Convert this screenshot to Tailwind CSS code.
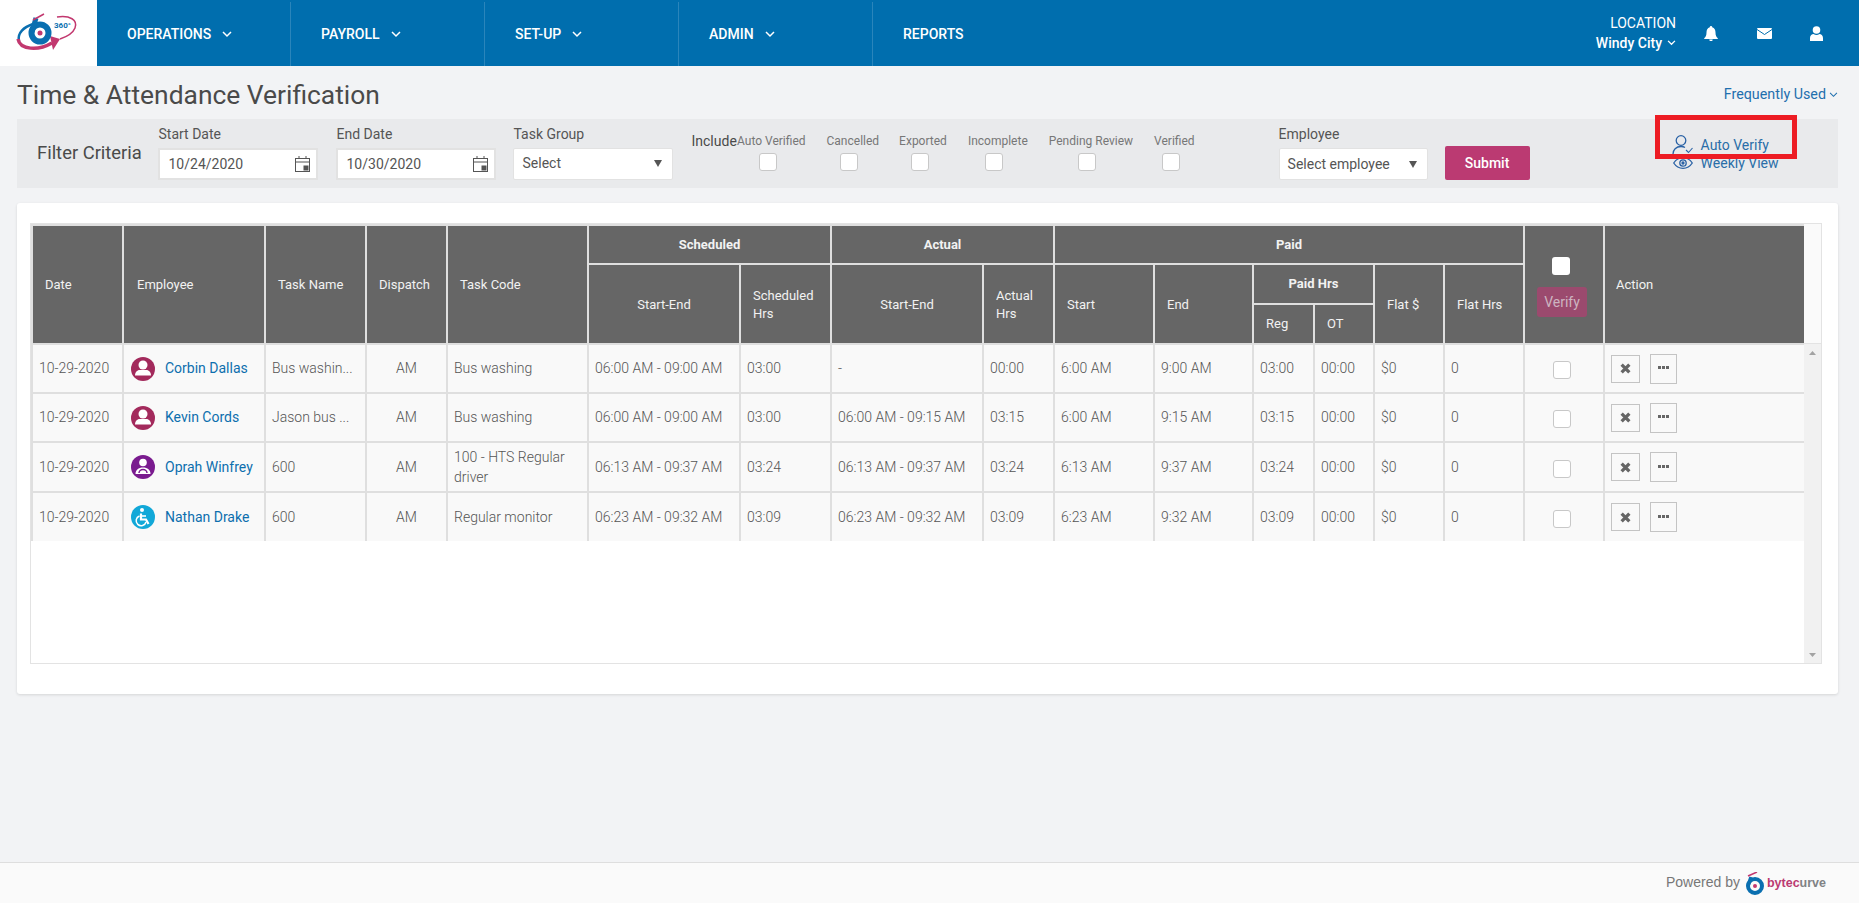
<!DOCTYPE html>
<html><head><meta charset="utf-8"><title>Time &amp; Attendance Verification</title>
<script src="https://cdn.jsdelivr.net/npm/@tailwindcss/browser@4"></script></head>
<body class="relative h-[903px] w-[1859px] overflow-hidden bg-[#f2f3f5] font-['Roboto',sans-serif] text-[14px] text-[#555]">

<header class="flex h-[66px] bg-[#006eae] text-white">
  <div class="h-[66px] w-[97px] bg-white">
    <svg width="97" height="66" viewBox="0 0 97 66" fill="none">
      <path d="M19 41C17 33 24 27 33 24" stroke="#0a6fb0" stroke-width="2.500"/>
      <path d="M18 39C20 50 38 51 52 43" stroke="#c2386f" stroke-width="3.500"/>
      <path d="M50 36L60 39L53 50Z" fill="#c2386f"/>
      <circle cx="40" cy="33" r="8.500" stroke="#0a6fb0" stroke-width="6"/>
      <path d="M32 32L36 18" stroke="#0a6fb0" stroke-width="5"/>
      <circle cx="40" cy="33" r="2.500" fill="#c2386f"/>
      <path d="M33 20L44 14" stroke="#c2386f" stroke-width="1.500"/>
      <path d="M57 17C70 15 78 20 75 28C73 33 66 37 60 39" stroke="#c2386f" stroke-width="1.500"/>
      <text x="54" y="28" font-size="8" font-weight="700" fill="#0a6fb0" font-family="Roboto">360°</text>
    </svg>
  </div>
  <nav class="flex pt-[2px] font-medium">
    <a class="flex w-[193px] items-center gap-[11px] pl-[30px]">OPERATIONS <svg width="10" height="7" viewBox="0 0 10 7" fill="none" stroke="white" stroke-width="1.500"><path d="M1 1l4 4 4-4"/></svg></a>
    <a class="flex w-[194px] items-center gap-[11px] border-l border-[#2a85bb] pl-[30px]">PAYROLL <svg width="10" height="7" viewBox="0 0 10 7" fill="none" stroke="white" stroke-width="1.500"><path d="M1 1l4 4 4-4"/></svg></a>
    <a class="flex w-[194px] items-center gap-[11px] border-l border-[#2a85bb] pl-[30px]">SET-UP <svg width="10" height="7" viewBox="0 0 10 7" fill="none" stroke="white" stroke-width="1.500"><path d="M1 1l4 4 4-4"/></svg></a>
    <a class="flex w-[194px] items-center gap-[11px] border-l border-[#2a85bb] pl-[30px]">ADMIN <svg width="10" height="7" viewBox="0 0 10 7" fill="none" stroke="white" stroke-width="1.500"><path d="M1 1l4 4 4-4"/></svg></a>
    <a class="flex w-[194px] items-center border-l border-[#2a85bb] pl-[30px]">REPORTS</a>
  </nav>
  <div class="ml-auto flex items-center">
    <div class="mr-[28px] text-right leading-[20px]">
      <div class="font-normal">LOCATION</div>
      <div class="flex items-center gap-[5px] font-medium">Windy City <svg width="9" height="6" viewBox="0 0 10 7" fill="none" stroke="white" stroke-width="1.500"><path d="M1 1l4 4 4-4"/></svg></div>
    </div>
    <svg class="mr-[39px]" width="14" height="15" viewBox="0 0 14 15" fill="white"><path d="M7 0a1.200 1.200 0 0 1 1.200 1.300C10.600 1.900 11.500 4 11.500 6.500c0 3 .8 4.500 2.300 5.700v.8H.2v-.8C1.700 11 2.500 9.500 2.500 6.500 2.500 4 3.400 1.900 5.800 1.300A1.200 1.200 0 0 1 7 0zM5.300 13.500h3.400a1.700 1.700 0 0 1-3.400 0z"/></svg>
    <svg class="mr-[38px]" width="15" height="11" viewBox="0 0 15 11"><rect width="15" height="11" rx="1" fill="white"/><path d="M0 1.500l7.500 5 7.500-5" fill="none" stroke="#006eae" stroke-width="1"/></svg>
    <svg class="mr-[36px]" width="13" height="15" viewBox="0 0 13 15" fill="white"><circle cx="6.500" cy="4" r="3.800"/><path d="M0 15v-3c0-2.800 2-4 3.500-4 1 .7 2 1 3 1s2-.3 3-1c1.500 0 3.500 1.200 3.500 4v3z"/></svg>
  </div>
</header>

<main class="pr-[21px] pl-[17px]">
  <div class="flex h-[53px] items-center justify-between pt-[4px]">
    <h1 class="text-[26.4px] leading-[30px] font-normal text-[#4a4a4a]">Time &amp; Attendance Verification</h1>
    <div class="flex items-center gap-[3px] pt-[1px] text-[14.3px] text-[#1f6fae]">Frequently Used <svg width="9" height="6" viewBox="0 0 10 7" fill="none" stroke="#1f6fae" stroke-width="1.200"><path d="M1 1l4 4 4-4"/></svg></div>
  </div>

  <section class="flex h-[69px] items-start bg-[#e9eaec]">
    <div class="ml-[20px] w-[121.5px] pt-[23px] text-[18.4px] leading-[22px] text-[#4a4a4a]">Filter Criteria</div>

    <div class="w-[159px] pt-[5px]">
      <div class="mb-[4px] leading-[20px]">Start Date</div>
      <div class="ml-[-1px] flex h-[32px] items-center justify-between border-2 border-[#e2e2e2] bg-white pr-[6px] pl-[9px]">10/24/2020
        <svg width="15" height="16" viewBox="0 0 15 16" fill="none" stroke="#555"><rect x=".5" y="2.500" width="14" height="13"/><path d="M.5 6h14M4 0v3M11 0v3"/><rect x="9" y="10" width="4" height="4" fill="#555"/></svg></div>
    </div>
    <div class="ml-[19px] w-[159px] pt-[5px]">
      <div class="mb-[4px] leading-[20px]">End Date</div>
      <div class="ml-[-1px] flex h-[32px] items-center justify-between border-2 border-[#e2e2e2] bg-white pr-[6px] pl-[9px]">10/30/2020
        <svg width="15" height="16" viewBox="0 0 15 16" fill="none" stroke="#555"><rect x=".5" y="2.500" width="14" height="13"/><path d="M.5 6h14M4 0v3M11 0v3"/><rect x="9" y="10" width="4" height="4" fill="#555"/></svg></div>
    </div>
    <div class="ml-[18px] w-[159px] pt-[5px]">
      <div class="mb-[4px] leading-[20px]">Task Group</div>
      <div class="ml-[-1px] flex h-[32px] items-center justify-between rounded-[2px] border border-[#e2e2e2] bg-white pr-[10px] pb-[1px] pl-[9px]">Select
        <svg width="8" height="7" viewBox="0 0 8 7" fill="#555"><path d="M0 0h8L4 7z"/></svg></div>
    </div>

    <div class="ml-[19px] w-[45.5px] pt-[12px] leading-[20px] text-[#4a4a4a]">Include</div>
    <div class="flex flex-col items-center pt-[14px] text-[12px] leading-[16px] text-[#777]">Auto Verified<span class="mt-[4px] mr-[7px] block h-[18px] w-[18px] rounded-[3px] border border-[#c8c8c8] bg-white"></span></div>
    <div class="ml-[21px] flex flex-col items-center pt-[14px] text-[12px] leading-[16px] text-[#777]">Cancelled<span class="mt-[4px] mr-[7px] block h-[18px] w-[18px] rounded-[3px] border border-[#c8c8c8] bg-white"></span></div>
    <div class="ml-[20px] flex flex-col items-center pt-[14px] text-[12px] leading-[16px] text-[#777]">Exported<span class="mt-[4px] mr-[7px] block h-[18px] w-[18px] rounded-[3px] border border-[#c8c8c8] bg-white"></span></div>
    <div class="ml-[21px] flex flex-col items-center pt-[14px] text-[12px] leading-[16px] text-[#777]">Incomplete<span class="mt-[4px] mr-[7px] block h-[18px] w-[18px] rounded-[3px] border border-[#c8c8c8] bg-white"></span></div>
    <div class="ml-[21px] flex flex-col items-center pt-[14px] text-[12px] leading-[16px] text-[#777]">Pending Review<span class="mt-[4px] mr-[7px] block h-[18px] w-[18px] rounded-[3px] border border-[#c8c8c8] bg-white"></span></div>
    <div class="ml-[21px] flex flex-col items-center pt-[14px] text-[12px] leading-[16px] text-[#777]">Verified<span class="mt-[4px] mr-[7px] block h-[18px] w-[18px] rounded-[3px] border border-[#c8c8c8] bg-white"></span></div>

    <div class="ml-[84px] w-[149px] pt-[5px]">
      <div class="mb-[4px] leading-[20px]">Employee</div>
      <div class="flex h-[32px] items-center justify-between rounded-[2px] border border-[#e2e2e2] bg-white pr-[10px] pl-[8px]">Select employee
        <svg width="8" height="7" viewBox="0 0 8 7" fill="#555"><path d="M0 0h8L4 7z"/></svg></div>
    </div>
    <div class="mt-[27px] ml-[17px] flex h-[34px] w-[85px] items-center justify-center rounded-[2px] bg-[#bb3a72] font-medium text-white">Submit</div>

    <div class="mt-[16px] ml-[143px] leading-[18px] text-[#2a6ea8]">
      <div class="flex items-center"><svg class="mr-[8px] ml-[-1px]" width="21" height="19" viewBox="0 0 21 19" fill="none" stroke="#2a62a5" stroke-width="1.300"><circle cx="9" cy="5.500" r="4.800"/><path d="M1 19c0-4 3-7.500 8-7.500 1.500 0 3 .3 4 1"/><path d="M14 15l2.500 2.500L20.500 13" stroke-width="1.100"/></svg>Auto Verify</div>
      <div class="flex items-center"><svg class="mr-[8px]" width="20" height="12" viewBox="0 0 20 12" fill="none" stroke="#2a62a5" stroke-width="1.300"><path d="M.7 6C3 2.500 6.300.7 10 .7s7 1.800 9.300 5.300c-2.300 3.500-5.600 5.300-9.300 5.300S3 9.500.7 6z"/><circle cx="10" cy="6" r="3.200"/><circle cx="10" cy="6" r="1" fill="#2a62a5"/></svg>Weekly View</div>
    </div>
  </section>

  <section class="mt-[15px] h-[491px] rounded-[3px] bg-white px-[13px] pt-[20px] shadow-[0_1px_3px_rgba(0,0,0,0.12)]">
    <div class="flex h-[441px] w-[1792px] border border-[#e3e3e3]">
      <div class="w-[1773px]">
        <table class="w-[1773px] table-fixed border-collapse text-[14px] text-[#555] [&_td]:border-2 [&_td]:border-[#dfdfdf] [&_td]:bg-[#f9f9f9] [&_td]:px-[6px] [&_td]:font-light [&_th]:border-2 [&_th]:border-[#dfdfdf] [&_th]:bg-[#666] [&_th]:font-normal [&_th]:text-[13px] [&_th]:leading-[18px] [&_th]:text-[#f2f2f2]">
          <colgroup>
            <col class="w-[91px]"><col class="w-[142px]"><col class="w-[101px]"><col class="w-[81px]"><col class="w-[141px]"><col class="w-[152px]"><col class="w-[91px]"><col class="w-[152px]"><col class="w-[71px]"><col class="w-[100px]"><col class="w-[99px]"><col class="w-[61px]"><col class="w-[60px]"><col class="w-[70px]"><col class="w-[80px]"><col class="w-[80px]"><col class="w-[201px]">
          </colgroup>
          <thead>
            <tr class="h-[39px]">
              <th rowspan="3" class="pl-[12px] text-left">Date</th>
              <th rowspan="3" class="pl-[13px] text-left">Employee</th>
              <th rowspan="3" class="pl-[12px] text-left">Task Name</th>
              <th rowspan="3" class="pl-[12px] text-left">Dispatch</th>
              <th rowspan="3" class="pl-[12px] text-left">Task Code</th>
              <th colspan="2" class="font-bold!">Scheduled</th>
              <th colspan="2" class="font-bold!">Actual</th>
              <th colspan="6" class="font-bold!">Paid</th>
              <th rowspan="3" class="align-top">
                <span class="mt-[31px] ml-[27px] block h-[18px] w-[18px] rounded-[3px] bg-white"></span>
                <span class="mt-[12px] ml-[12px] flex h-[30px] w-[50px] items-center justify-center rounded-[3px] bg-[#9b4a6e] text-[14px] text-[#cdb4c0]">Verify</span>
              </th>
              <th rowspan="3" class="pl-[11px] text-left">Action</th>
            </tr>
            <tr class="h-[40px]">
              <th rowspan="2" class="pt-[2px]">Start-End</th>
              <th rowspan="2" class="pt-[1px] pl-[12px] text-left">Scheduled Hrs</th>
              <th rowspan="2" class="pt-[2px]">Start-End</th>
              <th rowspan="2" class="pt-[1px] pl-[12px] text-left">Actual Hrs</th>
              <th rowspan="2" class="pt-[2px] pl-[12px] text-left">Start</th>
              <th rowspan="2" class="pt-[2px] pl-[12px] text-left">End</th>
              <th colspan="2" class="font-bold!">Paid Hrs</th>
              <th rowspan="2" class="pt-[2px] pl-[12px] text-left">Flat $</th>
              <th rowspan="2" class="pt-[2px] pl-[12px] text-left">Flat Hrs</th>
            </tr>
            <tr class="h-[40px]">
              <th class="pl-[12px] text-left">Reg</th>
              <th class="pl-[12px] text-left">OT</th>
            </tr>
          </thead>
          <tbody>
            <tr class="h-[49px]">
              <td>10-29-2020</td>
              <td><div class="ml-[1px] flex items-center gap-[10px]"><svg width="24" height="24" viewBox="0 0 24 24"><circle cx="12" cy="12" r="12" fill="#a32a5c"/><circle cx="12" cy="8" r="4.500" fill="white"/><path d="M4 18.500c0-4 3-5.500 4.500-5.500h7c1.500 0 4.500 1.500 4.500 5.500z" fill="white"/></svg><span class="font-normal text-[#0d6fae]">Corbin Dallas</span></div></td>
              <td class="truncate">Bus washin...</td>
              <td class="text-center">AM</td>
              <td>Bus washing</td>
              <td>06:00 AM - 09:00 AM</td>
              <td>03:00</td>
              <td>-</td>
              <td>00:00</td>
              <td>6:00 AM</td>
              <td>9:00 AM</td>
              <td>03:00</td>
              <td>00:00</td>
              <td>$0</td>
              <td>0</td>
              <td><span class="mt-[3px] ml-[22px] block h-[18px] w-[18px] rounded-[3px] border border-[#c8c8c8] bg-white"></span></td>
              <td><div class="flex items-center gap-[10px]"><span class="flex h-[28px] w-[29px] items-center justify-center border border-[#c4c4c4]"><svg width="11" height="11" viewBox="0 0 10 10" stroke="#666" stroke-width="3"><path d="M1.500 1.500l7 7M8.500 1.500l-7 7"/></svg></span><span class="flex h-[30px] w-[27px] items-center justify-center border border-[#c4c4c4] pb-[2px]"><svg width="11" height="3" viewBox="0 0 11 3" fill="#666"><rect width="3" height="3"/><rect x="4" width="3" height="3"/><rect x="8" width="3" height="3"/></svg></span></div></td>
            </tr>
            <tr class="h-[49px]">
              <td>10-29-2020</td>
              <td><div class="ml-[1px] flex items-center gap-[10px]"><svg width="24" height="24" viewBox="0 0 24 24"><circle cx="12" cy="12" r="12" fill="#a32a5c"/><circle cx="12" cy="8" r="4.500" fill="white"/><path d="M4 18.500c0-4 3-5.500 4.500-5.500h7c1.500 0 4.500 1.500 4.500 5.500z" fill="white"/></svg><span class="font-normal text-[#0d6fae]">Kevin Cords</span></div></td>
              <td class="truncate">Jason bus ...</td>
              <td class="text-center">AM</td>
              <td>Bus washing</td>
              <td>06:00 AM - 09:00 AM</td>
              <td>03:00</td>
              <td>06:00 AM - 09:15 AM</td>
              <td>03:15</td>
              <td>6:00 AM</td>
              <td>9:15 AM</td>
              <td>03:15</td>
              <td>00:00</td>
              <td>$0</td>
              <td>0</td>
              <td><span class="mt-[3px] ml-[22px] block h-[18px] w-[18px] rounded-[3px] border border-[#c8c8c8] bg-white"></span></td>
              <td><div class="flex items-center gap-[10px]"><span class="flex h-[28px] w-[29px] items-center justify-center border border-[#c4c4c4]"><svg width="11" height="11" viewBox="0 0 10 10" stroke="#666" stroke-width="3"><path d="M1.500 1.500l7 7M8.500 1.500l-7 7"/></svg></span><span class="flex h-[30px] w-[27px] items-center justify-center border border-[#c4c4c4] pb-[2px]"><svg width="11" height="3" viewBox="0 0 11 3" fill="#666"><rect width="3" height="3"/><rect x="4" width="3" height="3"/><rect x="8" width="3" height="3"/></svg></span></div></td>
            </tr>
            <tr class="h-[50px]">
              <td>10-29-2020</td>
              <td><div class="ml-[1px] flex items-center gap-[10px]"><svg width="24" height="24" viewBox="0 0 24 24"><circle cx="12" cy="12" r="12" fill="#7a1b8f"/><circle cx="12" cy="7.500" r="3.800" fill="white"/><path d="M4.500 19c0-4 3-6.500 7.500-6.500s7.500 2.500 7.500 6.500z" fill="white"/><path d="M8 18a4 3.500 0 0 1 8 0" fill="none" stroke="#7a1b8f" stroke-width="1.500"/></svg><span class="font-normal text-[#0d6fae]">Oprah Winfrey</span></div></td>
              <td>600</td>
              <td class="text-center">AM</td>
              <td class="leading-[20px]">100 - HTS Regular driver</td>
              <td>06:13 AM - 09:37 AM</td>
              <td>03:24</td>
              <td>06:13 AM - 09:37 AM</td>
              <td>03:24</td>
              <td>6:13 AM</td>
              <td>9:37 AM</td>
              <td>03:24</td>
              <td>00:00</td>
              <td>$0</td>
              <td>0</td>
              <td><span class="mt-[3px] ml-[22px] block h-[18px] w-[18px] rounded-[3px] border border-[#c8c8c8] bg-white"></span></td>
              <td><div class="flex items-center gap-[10px]"><span class="flex h-[28px] w-[29px] items-center justify-center border border-[#c4c4c4]"><svg width="11" height="11" viewBox="0 0 10 10" stroke="#666" stroke-width="3"><path d="M1.500 1.500l7 7M8.500 1.500l-7 7"/></svg></span><span class="flex h-[30px] w-[27px] items-center justify-center border border-[#c4c4c4] pb-[2px]"><svg width="11" height="3" viewBox="0 0 11 3" fill="#666"><rect width="3" height="3"/><rect x="4" width="3" height="3"/><rect x="8" width="3" height="3"/></svg></span></div></td>
            </tr>
            <tr class="h-[49px] [&_td]:border-b-0">
              <td>10-29-2020</td>
              <td><div class="ml-[1px] flex items-center gap-[10px]"><svg width="24" height="24" viewBox="0 0 24 24"><circle cx="12" cy="12" r="12" fill="#12a8d8"/><circle cx="11" cy="5" r="2" fill="white"/><path d="M10 8.500v6h5l2.500 4.500" fill="none" stroke="white" stroke-width="2.200"/><path d="M8.500 11a5 5 0 1 0 6.500 6" fill="none" stroke="white" stroke-width="1.500"/><path d="M10.500 11h4.500" stroke="white" stroke-width="1.600"/></svg><span class="font-normal text-[#0d6fae]">Nathan Drake</span></div></td>
              <td>600</td>
              <td class="text-center">AM</td>
              <td>Regular monitor</td>
              <td>06:23 AM - 09:32 AM</td>
              <td>03:09</td>
              <td>06:23 AM - 09:32 AM</td>
              <td>03:09</td>
              <td>6:23 AM</td>
              <td>9:32 AM</td>
              <td>03:09</td>
              <td>00:00</td>
              <td>$0</td>
              <td>0</td>
              <td><span class="mt-[3px] ml-[22px] block h-[18px] w-[18px] rounded-[3px] border border-[#c8c8c8] bg-white"></span></td>
              <td><div class="flex items-center gap-[10px]"><span class="flex h-[28px] w-[29px] items-center justify-center border border-[#c4c4c4]"><svg width="11" height="11" viewBox="0 0 10 10" stroke="#666" stroke-width="3"><path d="M1.500 1.500l7 7M8.500 1.500l-7 7"/></svg></span><span class="flex h-[30px] w-[27px] items-center justify-center border border-[#c4c4c4] pb-[2px]"><svg width="11" height="3" viewBox="0 0 11 3" fill="#666"><rect width="3" height="3"/><rect x="4" width="3" height="3"/><rect x="8" width="3" height="3"/></svg></span></div></td>
            </tr>
          </tbody>
        </table>
      </div>
      <div class="flex w-[18px] flex-col">
        <div class="h-[120px] border-b border-[#e3e3e3] bg-[#fafafa]"></div>
        <div class="flex flex-1 flex-col items-center justify-between bg-[#f1f1f1] pt-[7px] pb-[6px]">
          <svg width="7" height="4" viewBox="0 0 7 4" fill="#a3a3a3"><path d="M3.500 0L7 4H0z"/></svg>
          <svg width="7" height="4" viewBox="0 0 7 4" fill="#a3a3a3"><path d="M0 0h7L3.500 4z"/></svg>
        </div>
      </div>
    </div>
  </section>
</main>

<footer class="absolute right-0 bottom-0 left-0 flex h-[41px] items-center justify-end border-t border-[#dedede] bg-[#fafafa] pr-[33px] font-['Liberation_Sans',sans-serif] text-[14px] text-[#777]">
  <span class="mb-[2px]">Powered by</span>
  <svg class="mr-[2px] ml-[5px]" width="20" height="23" viewBox="0 0 20 23" fill="none"><circle cx="10" cy="14" r="7" stroke="#0a6fb0" stroke-width="4"/><path d="M3 14L6 5" stroke="#0a6fb0" stroke-width="3.500"/><path d="M3 4L12 0" stroke="#c2386f" stroke-width="1.500"/><circle cx="10" cy="14" r="2" fill="#c2386f"/></svg>
  <span class="mt-[1px] text-[12.5px] font-bold text-[#808285]"><span class="text-[#bb3a72]">bytec</span>urve</span>
</footer>

<div class="absolute top-[115px] left-[1655px] h-[44px] w-[142px] border-[5px] border-[#ed1c24]"></div>
</body></html>
